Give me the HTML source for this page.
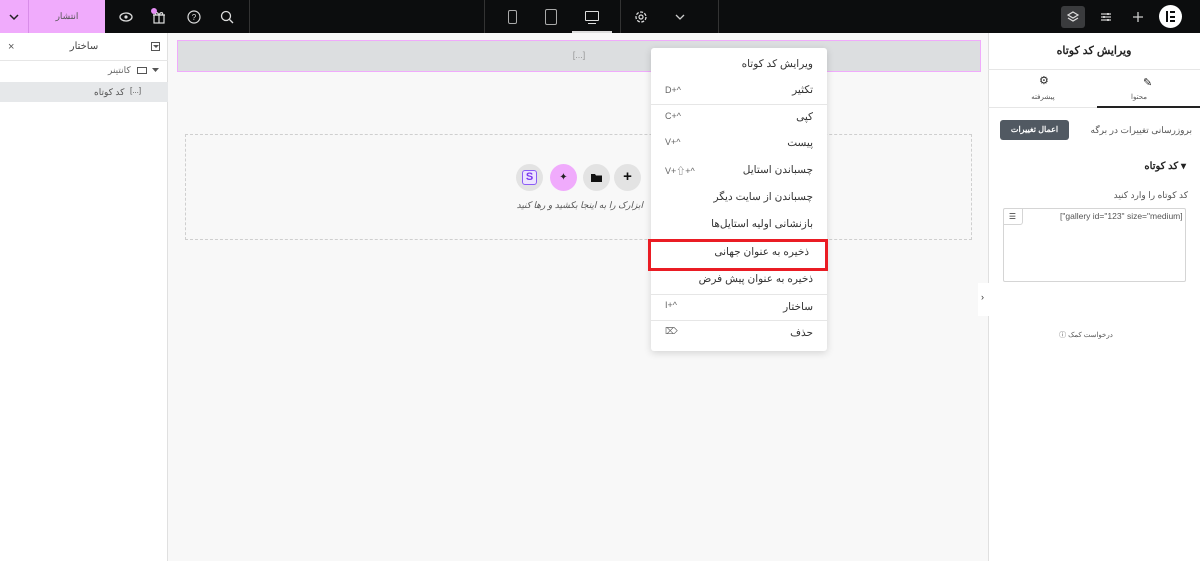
<!DOCTYPE html>
<html><head><meta charset="utf-8"><style>
*{box-sizing:border-box;margin:0;padding:0}
body{width:1200px;height:561px;overflow:hidden;background:#f8f8f8;font-family:"Liberation Sans","Noto Sans CJK SC",sans-serif;font-size:10px;color:#333;position:relative}
.a{position:absolute}
.top{left:0;top:0;width:1200px;height:33px;background:#0c0d0e}
.ic{position:absolute;top:9px;width:16px;height:16px}
.menu div.it{position:absolute;right:14px;font-size:10.5px;color:#333;direction:rtl}
.menu .k{position:absolute;left:14px;font-size:9px;color:#666;direction:ltr;unicode-bidi:bidi-override}
.menu .ln{position:absolute;left:0;right:0;height:1px;background:#e6e6e6}
</style></head><body>
<div class="a top">
 <div class="a" style="left:0;top:0;width:28px;height:33px;background:#f0abfc"></div>
 <div class="a" style="left:28px;top:0;width:1px;height:33px;background:#d88de8"></div>
 <div class="a" style="left:29px;top:0;width:76px;height:33px;background:#f0abfc;text-align:center;line-height:33px;font-size:9px;color:#555">انتشار</div>
 <svg class="a" style="left:8px;top:12px" width="12" height="10"><path d="M2 3l4 4 4-4" stroke="#222" stroke-width="1.5" fill="none"/></svg>
 <svg class="ic" style="left:118px"><ellipse cx="8" cy="8" rx="6" ry="4" stroke="#ddd" stroke-width="1.3" fill="none"/><circle cx="8" cy="8" r="1.6" fill="#ddd"/></svg>
 <svg class="ic" style="left:151px"><rect x="3" y="6" width="10" height="8" stroke="#ddd" stroke-width="1.2" fill="none"/><path d="M2 6h12M8 6v8M8 6c-2-4-5-2-3 0M8 6c2-4 5-2 3 0" stroke="#ddd" stroke-width="1.2" fill="none"/></svg>
 <div class="a" style="left:151px;top:8px;width:6px;height:6px;border-radius:50%;background:#e48ef2"></div>
 <svg class="ic" style="left:186px"><circle cx="8" cy="8" r="6" stroke="#ddd" stroke-width="1.2" fill="none"/><text x="8" y="11" font-size="8" fill="#ddd" text-anchor="middle" font-family="Liberation Sans">?</text></svg>
 <svg class="ic" style="left:219px"><circle cx="7" cy="7" r="4.5" stroke="#ddd" stroke-width="1.3" fill="none"/><path d="M10.5 10.5l3.5 3.5" stroke="#ddd" stroke-width="1.3"/></svg>
 <div class="a" style="left:249px;top:0;width:1px;height:33px;background:#333"></div>
 <div class="a" style="left:484px;top:0;width:1px;height:33px;background:#333"></div>
 <div class="a" style="left:620px;top:0;width:1px;height:33px;background:#333"></div>
 <div class="a" style="left:718px;top:0;width:1px;height:33px;background:#333"></div>
 <div class="a" style="left:508px;top:10px;width:9px;height:14px;border:1.3px solid #aaa;border-radius:2px"></div>
 <div class="a" style="left:545px;top:9px;width:12px;height:16px;border:1.3px solid #aaa;border-radius:2px"></div>
 <div class="a" style="left:585px;top:11px;width:14px;height:10px;border:1.3px solid #ddd;border-radius:1px"></div>
 <div class="a" style="left:588px;top:23px;width:8px;height:1.3px;background:#ddd"></div>
 <div class="a" style="left:572px;top:31px;width:40px;height:2px;background:#ddd"></div>
 <svg class="ic" style="left:633px"><circle cx="8" cy="8" r="5" stroke="#ddd" stroke-width="1.3" fill="none" stroke-dasharray="3 1.5"/><circle cx="8" cy="8" r="2" stroke="#ddd" stroke-width="1.2" fill="none"/></svg>
 <svg class="a" style="left:674px;top:13px" width="12" height="8"><path d="M2 2l4 4 4-4" stroke="#ccc" stroke-width="1.3" fill="none"/></svg>
 <div class="a" style="left:1061px;top:6px;width:24px;height:22px;background:#3a3b3d;border-radius:3px"></div>
 <svg class="ic" style="left:1065px"><path d="M8 3l5 3-5 3-5-3z M3 9l5 3 5-3" stroke="#ddd" stroke-width="1.2" fill="none"/></svg>
 <svg class="ic" style="left:1098px"><path d="M3 5h10M3 8h10M3 11h10" stroke="#ccc" stroke-width="1.2"/><rect x="9" y="4" width="2" height="2" fill="#ccc"/><rect x="5" y="7" width="2" height="2" fill="#ccc"/><rect x="9" y="10" width="2" height="2" fill="#ccc"/></svg>
 <svg class="ic" style="left:1130px"><path d="M8 3v10M3 8h10" stroke="#ccc" stroke-width="1.3"/></svg>
 <div class="a" style="left:1159px;top:5px;width:23px;height:23px;border-radius:50%;background:#fff"></div>
 <div class="a" style="left:1166px;top:11px;width:2px;height:11px;background:#0c0d0e"></div>
 <div class="a" style="left:1170px;top:11px;width:5px;height:2px;background:#0c0d0e"></div>
 <div class="a" style="left:1170px;top:15.5px;width:5px;height:2px;background:#0c0d0e"></div>
 <div class="a" style="left:1170px;top:20px;width:5px;height:2px;background:#0c0d0e"></div>
</div>

<div class="a" style="left:0;top:33px;width:168px;height:528px;background:#fff;border-right:1px solid #e0e0e0"></div>
<div class="a" style="left:0;top:60px;width:168px;height:1px;background:#e6e6e6"></div>
<div class="a" style="left:8px;top:41px;font-size:11px;color:#555">×</div>
<div class="a" style="left:0;top:41px;width:168px;text-align:center;font-size:10px;color:#444">ساختار</div>
<div class="a" style="left:151px;top:42px;width:9px;height:9px;border:1px solid #555"></div>
<svg class="a" style="left:152.5px;top:45px" width="6" height="4"><path d="M0 0h6L3 3z" fill="#555"/></svg>
<svg class="a" style="left:152px;top:68px" width="7" height="5"><path d="M0 0h7L3.5 4z" fill="#555"/></svg>
<div class="a" style="left:137px;top:67px;width:10px;height:7px;border:1.2px solid #555"></div>
<div class="a" style="left:108px;top:65px;font-size:9px;color:#666">کانتینر</div>
<div class="a" style="left:0;top:82px;width:168px;height:20px;background:#e6e8ea"></div>
<div class="a" style="left:94px;top:87px;font-size:9px;color:#555">کد کوتاه</div>
<div class="a" style="left:130px;top:86px;font-size:8px;color:#555">[...]</div>

<div class="a" style="left:177px;top:40px;width:804px;height:32px;background:#dcdee0;border:1.5px solid #f0abfc;text-align:center;line-height:28px;color:#999;font-size:9px">[...]</div>
<div class="a" style="left:185px;top:134px;width:787px;height:106px;border:1px dashed #cfcfcf"></div>
<div class="a" style="left:516px;top:164px;width:27px;height:27px;border-radius:50%;background:#e3e3e3"></div>
<div class="a" style="left:522px;top:170px;width:15px;height:15px;border-radius:3px;border:1.5px solid #8b5cf6;background:#ede4ff;color:#7c3aed;font-weight:bold;font-size:11px;text-align:center;line-height:12px">S</div>
<div class="a" style="left:550px;top:164px;width:27px;height:27px;border-radius:50%;background:#f0abfc;text-align:center;line-height:27px;font-size:10px;color:#222">✦</div>
<div class="a" style="left:583px;top:164px;width:27px;height:27px;border-radius:50%;background:#e3e3e3"></div>
<svg class="a" style="left:590px;top:171px" width="13" height="13"><path d="M1 3h4l1 1.5h6V11H1z" fill="#111"/></svg>
<div class="a" style="left:614px;top:164px;width:27px;height:27px;border-radius:50%;background:#e3e3e3;text-align:center;line-height:26px;font-size:15px;font-weight:bold;color:#111">+</div>
<div class="a" style="left:480px;top:200px;width:163px;text-align:right;font-size:9px;font-style:italic;color:#555;direction:rtl">ابزارک را به اینجا بکشید و رها کنید</div>

<div class="a menu" style="left:651px;top:48px;width:176px;height:303px;background:#fff;border-radius:3px;box-shadow:0 2px 8px rgba(0,0,0,.15)">
 <div class="it" style="top:10px">ویرایش کد کوتاه</div>
 <div class="it" style="top:36px">تکثیر</div><div class="k" style="top:37px">D+^</div>
 <div class="ln" style="top:56px"></div>
 <div class="it" style="top:63px">کپی</div><div class="k" style="top:63px">C+^</div>
 <div class="it" style="top:89px">پیست</div><div class="k" style="top:89px">V+^</div>
 <div class="it" style="top:116px">چسباندن استایل</div><div class="k" style="top:116px">V+⇧+^</div>
 <div class="it" style="top:143px">چسباندن از سایت دیگر</div>
 <div class="it" style="top:170px">بازنشانی اولیه استایل‌ها</div>
 <div class="it" style="top:198px;right:18px">ذخیره به عنوان جهانی</div>
 <div class="it" style="top:225px">ذخیره به عنوان پیش فرض</div>
 <div class="ln" style="top:246px"></div>
 <div class="it" style="top:253px">ساختار</div><div class="k" style="top:252px">I+^</div>
 <div class="ln" style="top:272px"></div>
 <div class="it" style="top:279px">حذف</div><div class="k" style="top:278px">⌦</div>
</div>
<div class="a" style="left:648px;top:239px;width:180px;height:32px;border:3px solid #ea1c24"></div>

<div class="a" style="left:988px;top:33px;width:212px;height:528px;background:#fff;border-left:1px solid #e0e0e0"></div>
<div class="a" style="left:978px;top:283px;width:11px;height:33px;background:#fff"></div>
<div class="a" style="left:981px;top:292px;font-size:9px;color:#333">›</div>
<div class="a" style="left:988px;top:44px;width:212px;text-align:center;font-size:11px;font-weight:bold;color:#222;direction:rtl">ویرایش کد کوتاه</div>
<div class="a" style="left:988px;top:69px;width:212px;height:1px;background:#e6e6e6"></div>
<div class="a" style="left:988px;top:107px;width:212px;height:1px;background:#e6e6e6"></div>
<div class="a" style="left:1097px;top:106px;width:103px;height:2px;background:#222"></div>
<div class="a" style="left:1143px;top:76px;font-size:11px;color:#222">✎</div>
<div class="a" style="left:1124px;top:93px;width:30px;text-align:center;font-size:7px;color:#555">محتوا</div>
<div class="a" style="left:1039px;top:74px;font-size:11px;color:#222">⚙</div>
<div class="a" style="left:1028px;top:93px;width:30px;text-align:center;font-size:7px;color:#555">پیشرفته</div>
<div class="a" style="left:1000px;top:120px;width:69px;height:20px;background:#515962;border-radius:3px;color:#fff;font-size:8px;text-align:center;line-height:20px;font-weight:bold">اعمال تغییرات</div>
<div class="a" style="left:1080px;top:125px;width:112px;text-align:right;font-size:9px;color:#555;direction:rtl">بروزرسانی تغییرات در برگه</div>
<div class="a" style="left:1130px;top:161px;width:56px;text-align:right;font-size:10px;font-weight:bold;color:#222;direction:rtl">▾ کد کوتاه</div>
<div class="a" style="left:1100px;top:190px;width:88px;text-align:right;font-size:9px;color:#555;direction:rtl">کد کوتاه را وارد کنید</div>
<div class="a" style="left:1003px;top:208px;width:183px;height:74px;border:1px solid #d5d5d5;border-radius:2px"></div>
<div class="a" style="left:1003px;top:208px;width:20px;height:17px;border-right:1px solid #d5d5d5;border-bottom:1px solid #d5d5d5;border-radius:0 0 3px 0;text-align:center;font-size:8px;line-height:17px">☰</div>
<div class="a" style="left:1060px;top:211px;font-size:8.5px;color:#555;direction:ltr;unicode-bidi:bidi-override">["gallery id="123" size="medium]</div>
<div class="a" style="left:1041px;top:330px;width:90px;text-align:center;font-size:7px;color:#555;direction:rtl">درخواست کمک ⓘ</div>
</body></html>
